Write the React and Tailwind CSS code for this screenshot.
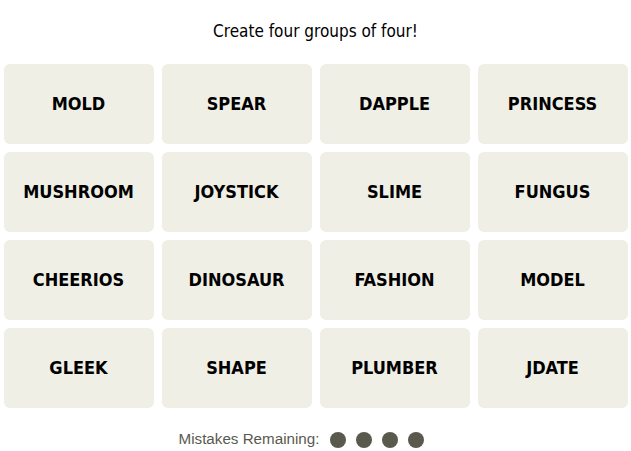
import React from 'react';

const words = [
  'MOLD', 'SPEAR', 'DAPPLE', 'PRINCESS',
  'MUSHROOM', 'JOYSTICK', 'SLIME', 'FUNGUS',
  'CHEERIOS', 'DINOSAUR', 'FASHION', 'MODEL',
  'GLEEK', 'SHAPE', 'PLUMBER', 'JDATE',
];

const narrow = { fontFamily: '"Liberation Sans Narrow", "DejaVu Sans Condensed", "Liberation Sans", sans-serif' };

const App = () => {
  return (
    <div className="w-[631px] h-[451px] bg-white flex flex-col items-center">
      <p
        className="mt-[19px] h-6 leading-6 text-[17px] text-black"
        style={narrow}
      >
        Create four groups of four!
      </p>
      <div className="mt-[21px] grid grid-cols-4 gap-2 w-[624px]">
        {words.map((w) => (
          <button
            key={w}
            className="h-20 rounded-md bg-[#efefe6] flex items-center justify-center pb-[2px] text-[18px] font-bold text-black"
            style={narrow}
          >
            {w}
          </button>
        ))}
      </div>
      <div className="mt-5 mr-[28px] h-6 flex items-center">
        <span
          className="text-[15.2px] text-[#5a594e] mr-[11px]"
          style={{ fontFamily: '"Liberation Sans", sans-serif' }}
        >
          Mistakes Remaining:
        </span>
        <div className="flex gap-[10px]">
          {[0, 1, 2, 3].map((i) => (
            <span key={i} className="w-4 h-4 rounded-full bg-[#5a594e]" />
          ))}
        </div>
      </div>
    </div>
  );
};

export default App;
